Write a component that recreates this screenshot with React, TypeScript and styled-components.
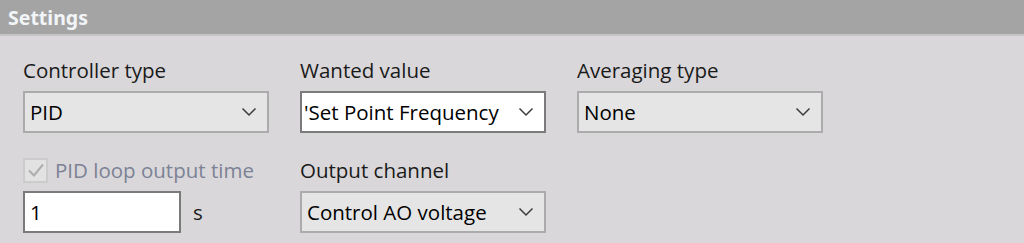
import React from "react";
import styled, { createGlobalStyle } from "styled-components";

const GlobalStyle = createGlobalStyle`
  html, body {
    margin: 0;
    padding: 0;
    background: #d9d7d9;
    font-family: "Open Sans", "Liberation Sans", sans-serif;
  }
`;

function Chevron() {
  return (
    <svg width="16" height="10" viewBox="0 0 16 10">
      <path d="M1.5 1.5 L8 8 L14.5 1.5" fill="none" stroke="#3c3c3c" strokeWidth="1.5" />
    </svg>
  );
}

function CheckMark() {
  return (
    <svg width="20" height="20" viewBox="0 0 20 20">
      <path d="M3 10.5 L8 15.5 L17 4.5" fill="none" stroke="#adadad" strokeWidth="2" />
    </svg>
  );
}

function App() {
  return (
    <Panel>
      <GlobalStyle />
      <Header>Settings</Header>
      <Body>
        <Field>
          <Label>Controller type</Label>
          <Combo>
            <ComboText>PID</ComboText>
            <Chevron />
          </Combo>
        </Field>
        <Field>
          <Label>Wanted value</Label>
          <Combo editable>
            <ComboText>'Set Point Frequency</ComboText>
            <Chevron />
          </Combo>
        </Field>
        <Field>
          <Label>Averaging type</Label>
          <Combo>
            <ComboText>None</ComboText>
            <Chevron />
          </Combo>
        </Field>

        <Field>
          <CheckRow>
            <CheckBox>
              <CheckMark />
            </CheckBox>
            <Label disabled>PID loop output time</Label>
          </CheckRow>
          <InputRow>
            <TextInput>1</TextInput>
            <Unit>s</Unit>
          </InputRow>
        </Field>
        <Field>
          <Label>Output channel</Label>
          <Combo>
            <ComboText>Control AO voltage</ComboText>
            <Chevron />
          </Combo>
        </Field>
      </Body>
    </Panel>
  );
}

const Panel = styled.div`
  width: 1024px;
  height: 243px;
  overflow: hidden;
  background: #d9d7d9;
`;

const Header = styled.div`
  height: 36px;
  box-sizing: border-box;
  padding: 6px 0 0 8px;
  background: #a4a4a4;
  border-bottom: 2px solid #c6c5c6;
  color: #f2f5f8;
  font-family: "Noto Sans", "Open Sans", sans-serif;
  font-weight: 700;
  font-size: 19.5px;
  line-height: 24px;
`;

const Body = styled.div`
  display: grid;
  grid-template-columns: 246px 246px 246px;
  column-gap: 31px;
  row-gap: 24px;
  padding: 21px 0 0 23px;
`;

const Field = styled.div`
  display: flex;
  flex-direction: column;
  gap: 8px;
`;

const Label = styled.div<{ disabled?: boolean }>`
  font-size: 20.5px;
  line-height: 26px;
  color: ${(p) => (p.disabled ? "#7c8296" : "#1a1a1a")};
  white-space: nowrap;
`;

const Combo = styled.div<{ editable?: boolean }>`
  height: 42px;
  box-sizing: border-box;
  display: flex;
  align-items: center;
  justify-content: space-between;
  padding: 0 10px 0 ${(p) => (p.editable ? "2px" : "5px")};
  background: ${(p) => (p.editable ? "#ffffff" : "#e5e5e5")};
  border: 2px solid ${(p) => (p.editable ? "#7a7a7a" : "#ababab")};
`;

const ComboText = styled.span`
  font-size: 20.5px;
  color: #000;
  white-space: nowrap;
`;

const CheckRow = styled.div`
  display: flex;
  align-items: center;
  gap: 7px;
  height: 26px;
`;

const CheckBox = styled.div`
  width: 25px;
  height: 25px;
  box-sizing: border-box;
  border: 2px solid #cccccc;
  background: #e2e2e2;
  display: flex;
  align-items: center;
  justify-content: center;
`;

const InputRow = styled.div`
  display: flex;
  align-items: center;
  gap: 12px;
`;

const TextInput = styled.div`
  width: 158px;
  height: 42px;
  box-sizing: border-box;
  display: flex;
  align-items: center;
  padding-left: 5px;
  background: #ffffff;
  border: 2px solid #7a7a7a;
  font-size: 20.5px;
  color: #000;
`;

const Unit = styled.span`
  font-size: 20.5px;
  color: #1a1a1a;
`;

export default App;
